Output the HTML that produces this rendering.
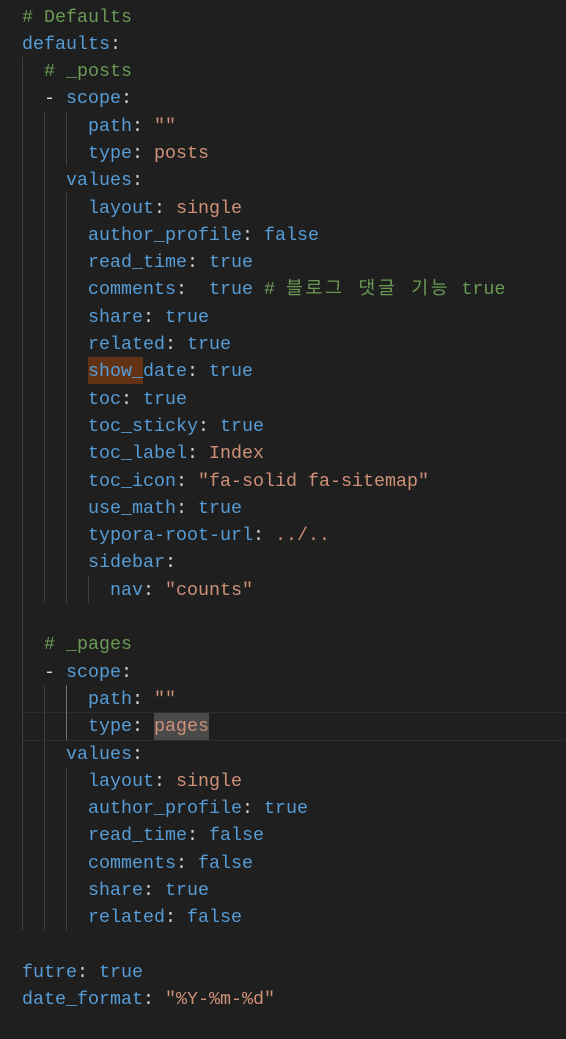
<!DOCTYPE html>
<html><head><meta charset="utf-8"><style>
html,body{margin:0;padding:0;background:#1f1f1f;width:566px;height:1039px;overflow:hidden}
pre{margin:0;position:absolute;left:22px;top:3.5px;font-family:"Liberation Mono","Noto Sans CJK KR",monospace;font-size:18.33px;line-height:27.3px;color:#d4d4d4}
.k{color:#569cd6}.s{color:#ce9178}.c{color:#6a9955}.b{color:#569cd6}
.ko{letter-spacing:2.7px}
.g{position:absolute;width:1px;background:#404040}
.ga{position:absolute;width:1px;background:#707070}
.hl{position:absolute}
</style></head><body>
<div class="hl" style="left:22px;top:712px;width:544px;height:27px;border-top:1px solid #2c2c2c;border-bottom:1px solid #2c2c2c"></div>
<div class="hl" style="left:88px;top:357px;width:55px;height:27px;background:#613214"></div>
<div class="hl" style="left:154px;top:713px;width:55px;height:27px;background:#4a4a4a"></div>
<div class="g" style="left:22px;top:57px;height:873px"></div>
<div class="g" style="left:44px;top:111px;height:492px"></div>
<div class="g" style="left:44px;top:685px;height:245px"></div>
<div class="g" style="left:66px;top:111px;height:55px"></div>
<div class="g" style="left:66px;top:193px;height:410px"></div>
<div class="ga" style="left:66px;top:685px;height:55px"></div>
<div class="g" style="left:66px;top:767px;height:163px"></div>
<div class="g" style="left:88px;top:576px;height:27px"></div>
<pre><span class="c"># Defaults</span>
<span class="k">defaults</span>:
  <span class="c"># _posts</span>
  - <span class="k">scope</span>:
      <span class="k">path</span>: <span class="s">""</span>
      <span class="k">type</span>: <span class="s">posts</span>
    <span class="k">values</span>:
      <span class="k">layout</span>: <span class="s">single</span>
      <span class="k">author_profile</span>: <span class="b">false</span>
      <span class="k">read_time</span>: <span class="b">true</span>
      <span class="k">comments</span>:  <span class="b">true</span> <span class="c"># <span class="ko">블로그 댓글 기능</span> true</span>
      <span class="k">share</span>: <span class="b">true</span>
      <span class="k">related</span>: <span class="b">true</span>
      <span class="k">show_date</span>: <span class="b">true</span>
      <span class="k">toc</span>: <span class="b">true</span>
      <span class="k">toc_sticky</span>: <span class="b">true</span>
      <span class="k">toc_label</span>: <span class="s">Index</span>
      <span class="k">toc_icon</span>: <span class="s">"fa-solid fa-sitemap"</span>
      <span class="k">use_math</span>: <span class="b">true</span>
      <span class="k">typora-root-url</span>: <span class="s">../..</span>
      <span class="k">sidebar</span>:
        <span class="k">nav</span>: <span class="s">"counts"</span>

  <span class="c"># _pages</span>
  - <span class="k">scope</span>:
      <span class="k">path</span>: <span class="s">""</span>
      <span class="k">type</span>: <span class="s">pages</span>
    <span class="k">values</span>:
      <span class="k">layout</span>: <span class="s">single</span>
      <span class="k">author_profile</span>: <span class="b">true</span>
      <span class="k">read_time</span>: <span class="b">false</span>
      <span class="k">comments</span>: <span class="b">false</span>
      <span class="k">share</span>: <span class="b">true</span>
      <span class="k">related</span>: <span class="b">false</span>

<span class="k">futre</span>: <span class="b">true</span>
<span class="k">date_format</span>: <span class="s">"%Y-%m-%d"</span></pre>
</body></html>
